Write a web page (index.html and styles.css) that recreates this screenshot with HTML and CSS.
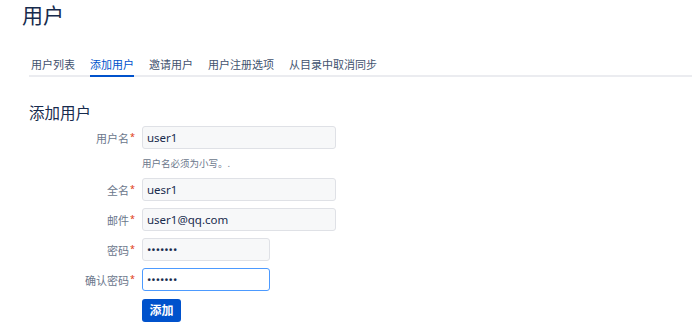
FILE: index.html
```html
<!DOCTYPE html>
<html lang="zh-CN">
<head>
    <meta charset="UTF-8">
    <title>用户</title>
    <link rel="stylesheet" href="styles.css">
</head>
<body>
    <div class="page">
        <h1 class="page-title">用户</h1>

        <div class="content">
            <ul class="tabs">
                <li class="tab">用户列表</li>
                <li class="tab active">添加用户</li>
                <li class="tab">邀请用户</li>
                <li class="tab">用户注册选项</li>
                <li class="tab">从目录中取消同步</li>
            </ul>

            <h2 class="section-title">添加用户</h2>

            <form class="user-form">
                <div class="field">
                    <label class="field-label">用户名<span class="req">*</span></label>
                    <input class="text-input" type="text" value="user1">
                </div>
                <div class="field-help">用户名必须为小写。.</div>
                <div class="field">
                    <label class="field-label">全名<span class="req">*</span></label>
                    <input class="text-input" type="text" value="uesr1">
                </div>
                <div class="field">
                    <label class="field-label">邮件<span class="req">*</span></label>
                    <input class="text-input" type="text" value="user1@qq.com">
                </div>
                <div class="field">
                    <label class="field-label">密码<span class="req">*</span></label>
                    <input class="text-input short" type="password" value="1234567">
                </div>
                <div class="field">
                    <label class="field-label">确认密码<span class="req">*</span></label>
                    <input class="text-input short focused" type="password" value="1234567">
                </div>
                <div class="field-actions">
                    <button type="button" class="btn-primary">添加</button>
                </div>
            </form>
        </div>
    </div>
</body>
</html>
```

FILE: styles.css
```css
body {
    margin: 0;
    font-family: 'Noto Sans', 'Noto Sans CJK SC', sans-serif;
    color: #172b4d;
    background: #fff;
}
.page {
    padding: 0 0 0 22px;
}
.page-title {
    margin: 0;
    font-size: 21px;
    line-height: 30px;
    font-weight: normal;
    color: #172b4d;
}
.content {
    padding-left: 7px;
}
.tabs {
    list-style: none;
    margin: 27px 0 0;
    padding: 0 0 0 2px;
    display: flex;
    gap: 15px;
    border-bottom: 2px solid #ebecf0;
}
.tab {
    font-size: 11px;
    line-height: 16px;
    color: #42526e;
    padding-bottom: 2px;
    margin-bottom: -2px;
    border-bottom: 2px solid transparent;
}
.tab.active {
    color: #0052cc;
    border-bottom-color: #0052cc;
}
.section-title {
    margin: 26px 0 0;
    font-size: 15.5px;
    line-height: 20px;
    font-weight: normal;
    color: #172b4d;
}
.user-form {
    margin-top: 3px;
    display: flex;
    flex-direction: column;
    gap: 7px;
}
.field {
    display: flex;
    align-items: center;
    gap: 7px;
}
.field-label {
    width: 106px;
    text-align: right;
    font-size: 11px;
    color: #6b778c;
}
.req {
    color: #de350b;
    font-size: 9px;
    vertical-align: top;
    margin-left: 1px;
}
.text-input {
    box-sizing: border-box;
    width: 194px;
    height: 23px;
    padding: 0 4px;
    border: 1px solid #dfe1e6;
    border-radius: 3px;
    background: #f7f8f9;
    font-family: inherit;
    font-size: 11.5px;
    color: #172b4d;
    outline: none;
}
.text-input.short {
    width: 128px;
}
.text-input.focused {
    background: #fff;
    border-color: #4c9aff;
}
.field-help {
    padding: 2px 0 1px 113px;
    font-size: 9.5px;
    line-height: 12px;
    color: #6b778c;
}
.field-actions {
    padding-left: 113px;
}
.btn-primary {
    width: 39px;
    height: 23px;
    border: none;
    border-radius: 3px;
    background: #0052cc;
    color: #fff;
    font-family: inherit;
    font-size: 12px;
    font-weight: bold;
    padding: 0;
    cursor: pointer;
}
```
